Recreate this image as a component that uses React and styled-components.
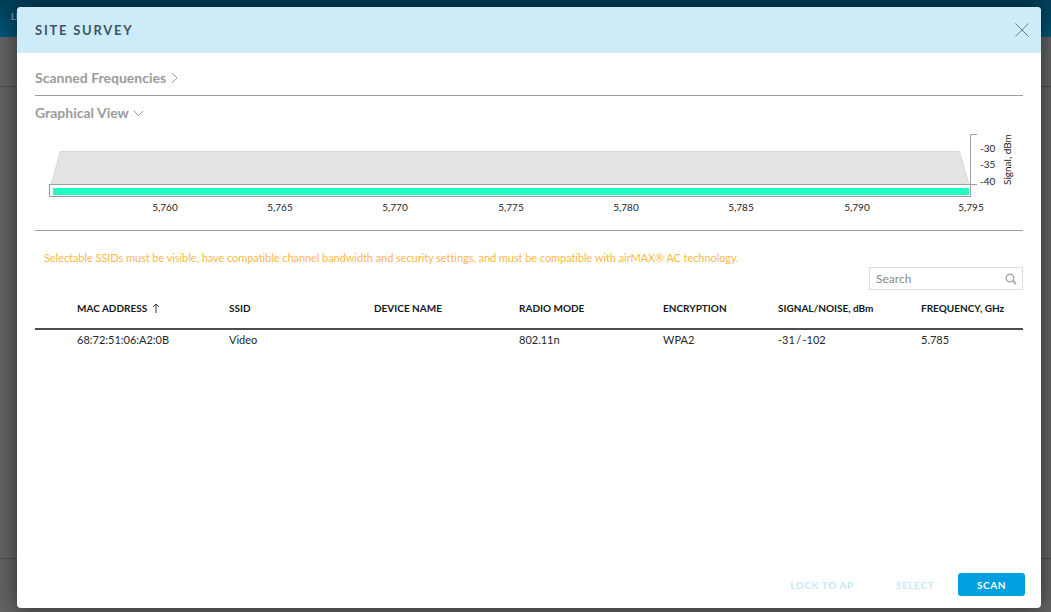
import styled, { createGlobalStyle } from "styled-components";
import { useState } from "react";

const GlobalStyle = createGlobalStyle`
  html, body {
    margin: 0;
    height: 100%;
    overflow: hidden;
    background: #636363;
    font-family: Lato, "Open Sans", sans-serif;
  }
`;

const Page = styled.div`
  position: relative;
  width: 1051px;
  height: 612px;
  overflow: hidden;
  display: flex;
  flex-direction: column;
`;

const TopBar = styled.div`
  height: 37px;
  background: linear-gradient(#003e58, #00587a);
  color: #7fa3b5;
  font-size: 9px;
  font-weight: 700;
  padding: 11px 0 0 11px;
  box-sizing: border-box;
`;

const BackdropRow = styled.div`
  height: ${props => props.h}px;
  border-bottom: 1px solid #4c4c4c;
`;

const Modal = styled.div`
  position: absolute;
  left: 17px;
  top: 7px;
  width: 1024px;
  height: 601px;
  background: #fff;
  border-radius: 4px;
  box-shadow: 0 0 22px rgba(0, 0, 0, 0.55);
  display: flex;
  flex-direction: column;
  overflow: hidden;
`;

const ModalHeader = styled.div`
  height: 46px;
  flex: none;
  background: #cdebf9;
  display: flex;
  align-items: center;
  justify-content: space-between;
  padding: 0 12px 0 18px;
`;

const Title = styled.h1`
  margin: 0;
  font-size: 13px;
  font-weight: 700;
  letter-spacing: 1.75px;
  color: #3f5666;
`;

const CloseButton = styled.button`
  border: 0;
  padding: 0;
  background: none;
  width: 14px;
  height: 14px;
  display: block;
`;

const ModalBody = styled.div`
  flex: 1;
  display: flex;
  flex-direction: column;
  padding: 0 18px;
  min-height: 0;
`;

const Section = styled.div`
  height: ${props => props.h}px;
  flex: none;
  box-sizing: border-box;
  display: flex;
  align-items: flex-start;
  padding-top: ${props => props.pt || 0}px;
  border-bottom: ${props => (props.line ? "1px solid #9b9ca3" : "0")};
`;

const SectionToggle = styled.div`
  display: flex;
  align-items: center;
  gap: ${props => props.gap}px;
  font-size: 14px;
  font-weight: 700;
  line-height: 18px;
  color: #9b9b9b;
`;

const ChartWrap = styled.div`
  height: 100px;
  flex: none;
  box-sizing: border-box;
  border-bottom: 1px solid #9b9ca3;
`;

const Notice = styled.p`
  margin: 0;
  padding: 19px 0 0 9px;
  font-size: 11px;
  letter-spacing: -0.065px;
  line-height: 15px;
  color: #ffb84a;
  height: 36px;
  flex: none;
  box-sizing: border-box;
`;

const SearchRow = styled.div`
  display: flex;
  justify-content: flex-end;
  flex: none;
  height: 32px;
`;

const SearchBox = styled.label`
  width: 154px;
  height: 23px;
  box-sizing: border-box;
  border: 1px solid #dcdcdc;
  display: flex;
  align-items: center;
  padding: 0 5px 0 6px;
`;

const SearchInput = styled.input`
  flex: 1;
  min-width: 0;
  border: 0;
  outline: 0;
  padding: 0;
  font: 12px Lato, sans-serif;
  color: #444;
  &::placeholder {
    color: #8a8a8a;
    opacity: 1;
  }
`;

const Row = styled.div`
  display: grid;
  grid-template-columns: 152px 145px 145px 144px 115px 143px 1fr;
  padding-left: 42px;
  align-items: center;
  color: #22282c;
  ${props => props.head && `
    height: 18px;
    padding-bottom: 11px;
    border-bottom: 2px solid #4a4d50;
    font-size: 10px;
    font-weight: 700;
    color: #14181b;
  `}
  ${props => !props.head && `
    height: 18px;
    font-size: 11px;
  `}
`;

const SortCell = styled.span`
  display: flex;
  align-items: center;
  gap: 5px;
`;

const SignalCell = styled.span`
  word-spacing: -1.5px;
`;

const Footer = styled.div`
  margin-top: auto;
  margin-right: -2px;
  flex: none;
  height: 35px;
  display: flex;
  align-items: flex-start;
  justify-content: flex-end;
`;

const FooterButton = styled.button`
  height: 23px;
  width: ${props => props.w}px;
  margin-left: ${props => props.ml || 0}px;
  border: 0;
  border-radius: 3px;
  padding: 0;
  font: 700 10px Lato, sans-serif;
  letter-spacing: 0.6px;
  background: ${props => (props.primary ? "#009fdf" : "transparent")};
  color: ${props => (props.primary ? "#fff" : "#c5e7f7")};
`;

const ChartText = styled.text`
  font-family: Lato, sans-serif;
  font-size: 10px;
  fill: #1d2327;
`;

const freqTicks = [
  ["5,760", 130],
  ["5,765", 245],
  ["5,770", 360],
  ["5,775", 476],
  ["5,780", 591],
  ["5,785", 706],
  ["5,790", 822],
  ["5,795", 936],
];

const signalTicks = [
  ["-30", 21],
  ["-35", 37],
  ["-40", 54],
];

function SurveyChart() {
  return (
    <svg width="988" height="99" viewBox="0 0 988 99" style={{ display: "block" }}>
      <polygon points="15,57 25.5,20.5 924.5,20.5 935,57" fill="#e4e4e4" stroke="#d6d6d6" />
      <rect x="14.5" y="53.5" width="921" height="12" fill="#fff" stroke="#9da0a3" />
      <rect x="18" y="57" width="916" height="7" fill="#1fffc5" />
      <path d="M942 3.5H935.5V53.5M935.5 53.5H942" fill="none" stroke="#9da0a3" />
      {signalTicks.map(([label, y]) => (
        <ChartText key={label} x="945" y={y}>{label}</ChartText>
      ))}
      <ChartText transform="translate(976 54) rotate(-90)">Signal, dBm</ChartText>
      {freqTicks.map(([label, x]) => (
        <ChartText key={label} x={x} y="80" textAnchor="middle">{label}</ChartText>
      ))}
    </svg>
  );
}

const rows = [
  { mac: "68:72:51:06:A2:0B", ssid: "Video", name: "", mode: "802.11n", enc: "WPA2", signal: "-31 / -102", freq: "5.785" },
];

export default function App() {
  const [query, setQuery] = useState("");

  return (
    <Page>
      <GlobalStyle />
      <TopBar>LINK</TopBar>
      <BackdropRow h={49} />
      <BackdropRow h={471} />

      <Modal>
        <ModalHeader>
          <Title>SITE SURVEY</Title>
          <CloseButton aria-label="Close">
            <svg width="14" height="14" viewBox="0 0 14 14">
              <path d="M0.5 0.5L13.5 13.5M13.5 0.5L0.5 13.5" stroke="#5f8293" strokeWidth="1" fill="none" />
            </svg>
          </CloseButton>
        </ModalHeader>

        <ModalBody>
          <Section h={43} line pt={16}>
            <SectionToggle gap={5}>
              Scanned Frequencies
              <svg width="7" height="12" viewBox="0 0 7 12">
                <path d="M1 1L6 6L1 11" stroke="#9b9b9b" fill="none" />
              </svg>
            </SectionToggle>
          </Section>
          <Section h={35} pt={8}>
            <SectionToggle gap={4}>
              Graphical View
              <svg width="11" height="7" viewBox="0 0 11 7">
                <path d="M1 1L5.5 5.5L10 1" stroke="#9b9b9b" fill="none" />
              </svg>
            </SectionToggle>
          </Section>

          <ChartWrap>
            <SurveyChart />
          </ChartWrap>

          <Notice>
            Selectable SSIDs must be visible, have compatible channel bandwidth and security settings, and must be compatible with airMAX® AC technology.
          </Notice>

          <SearchRow>
            <SearchBox>
              <SearchInput placeholder="Search" value={query} onChange={(e) => setQuery(e.target.value)} />
              <svg width="12" height="12" viewBox="0 0 12 12">
                <circle cx="5" cy="5" r="3.8" stroke="#a5a9ac" strokeWidth="1.4" fill="none" />
                <path d="M8 8L11 11" stroke="#a5a9ac" strokeWidth="1.8" />
              </svg>
            </SearchBox>
          </SearchRow>

          <Row head>
            <SortCell>
              MAC ADDRESS
              <svg width="8" height="10" viewBox="0 0 8 10">
                <path d="M4 10V1M1 4L4 1L7 4" stroke="#33393d" fill="none" />
              </svg>
            </SortCell>
            <span>SSID</span>
            <span>DEVICE NAME</span>
            <span>RADIO MODE</span>
            <span>ENCRYPTION</span>
            <span>SIGNAL/NOISE, dBm</span>
            <span>FREQUENCY, GHz</span>
          </Row>
          {rows.map((row) => (
            <Row key={row.mac}>
              <span>{row.mac}</span>
              <span>{row.ssid}</span>
              <span>{row.name}</span>
              <span>{row.mode}</span>
              <span>{row.enc}</span>
              <SignalCell>{row.signal}</SignalCell>
              <span>{row.freq}</span>
            </Row>
          ))}

          <Footer>
            <FooterButton w={70}>LOCK TO AP</FooterButton>
            <FooterButton w={50} ml={33}>SELECT</FooterButton>
            <FooterButton w={67} ml={18} primary>SCAN</FooterButton>
          </Footer>
        </ModalBody>
      </Modal>
    </Page>
  );
}
